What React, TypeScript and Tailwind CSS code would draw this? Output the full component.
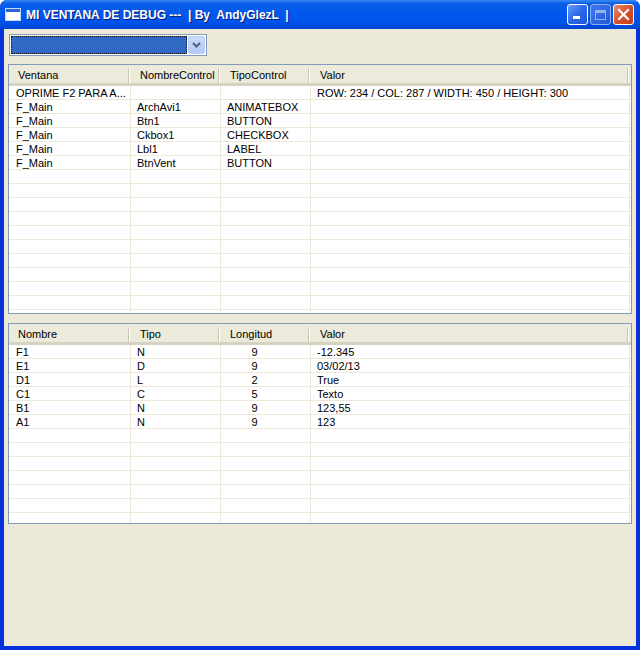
import React from "react";

const font = { fontFamily: '"Liberation Sans", Arial, sans-serif' };

// rows of the first grid (controls of the form)
const controls = [
  ["OPRIME F2 PARA A...", "", "", "ROW: 234 / COL: 287 / WIDTH: 450 / HEIGHT: 300"],
  ["F_Main", "ArchAvi1", "ANIMATEBOX", ""],
  ["F_Main", "Btn1", "BUTTON", ""],
  ["F_Main", "Ckbox1", "CHECKBOX", ""],
  ["F_Main", "Lbl1", "LABEL", ""],
  ["F_Main", "BtnVent", "BUTTON", ""],
];

// rows of the second grid (variables)
const vars = [
  ["F1", "N", "9", "-12.345"],
  ["E1", "D", "9", "03/02/13"],
  ["D1", "L", "2", "True"],
  ["C1", "C", "5", "Texto"],
  ["B1", "N", "9", "123,55"],
  ["A1", "N", "9", "123"],
];

function HeaderCell({ label, w }: { label: string; w: string }) {
  return (
    <div className={`${w} flex items-center h-full pl-[9px]`}>
      <span className="text-[11px] leading-none text-black">{label}</span>
      <div className="ml-auto mr-[1px] flex h-[15px]">
        <div className="w-px bg-[#C7C5B2]" />
        <div className="w-px bg-white" />
      </div>
    </div>
  );
}

function Grid({
  headers,
  rows,
  total,
  height,
  centerThird,
}: {
  headers: string[];
  rows: string[][];
  total: number;
  height: string;
  centerThird?: boolean;
}) {
  const filled = [...rows];
  while (filled.length < total) filled.push(["", "", "", ""]);
  const widths = ["w-[122px]", "w-[90px]", "w-[90px]", "flex-1"];

  return (
    <div className={`${height} mx-[4px] border border-[#7F9DB9] bg-white flex flex-col overflow-hidden`}>
      <div className="flex h-[21px] shrink-0 pt-[3px] bg-[#EBEADB] border-b-[3px] border-[#D6D2C2]">
        {headers.map((h, i) => (
          <HeaderCell key={h} label={h} w={i === 3 ? "flex-1 pr-[1px]" : widths[i]} />
        ))}
      </div>
      <div className="flex flex-col">
        {filled.map((r, ri) => (
          <div key={ri} className="flex h-[14px] shrink-0 border-b border-[#ECE9D8]">
            {r.map((c, ci) => (
              <div
                key={ci}
                className={`${widths[ci]} border-r border-[#ECE9D8] text-[11px] leading-[14px] text-black whitespace-nowrap overflow-hidden ${
                  centerThird && ci === 2 ? "text-center pr-[22px]" : "pl-[6px]"
                } ${ci === 0 ? "pl-[7px]" : ""} ${ci === 3 ? "mr-[1px]" : ""}`}
              >
                {c}
              </div>
            ))}
          </div>
        ))}
      </div>
    </div>
  );
}

function CaptionButtons() {
  return (
    <div className="flex gap-[2px] mr-[1px]">
      <div className="w-[21px] h-[21px] rounded-[3px] border border-white bg-gradient-to-br from-[#6A9CFB] via-[#2B67E8] to-[#1E55D6] flex items-end pl-[5px] pb-[5px]">
        <div className="w-[7px] h-[3px] bg-white" />
      </div>
      <div className="w-[21px] h-[21px] rounded-[3px] border border-[#8BB0F4] bg-gradient-to-br from-[#3D78EE] to-[#2658D8] flex items-center justify-center">
        <div className="w-[11px] h-[10px] border border-[#94B4F2] border-t-[3px]" />
      </div>
      <div className="w-[21px] h-[21px] rounded-[3px] border border-white bg-gradient-to-br from-[#E88A6A] via-[#D9512A] to-[#C43A15] flex items-center justify-center">
        <svg width="13" height="13" viewBox="0 0 13 13">
          <path d="M2 2 L11 11 M11 2 L2 11" stroke="white" strokeWidth="2.2" strokeLinecap="square" />
        </svg>
      </div>
    </div>
  );
}

export default function App() {
  return (
    <div style={font} className="w-[640px] h-[650px] flex flex-col bg-[#0831D9] rounded-t-[7px] overflow-hidden">
      {/* title bar */}
      <div className="h-[29px] shrink-0 flex items-center pl-[5px] pr-[5px] bg-[linear-gradient(to_bottom,#3A8CF5_0%,#0A5FE6_12%,#0058EE_45%,#0052E8_80%,#0043CF_100%)]">
        <div className="w-[16px] h-[13px] bg-white border border-[#C8D8F8] flex flex-col">
          <div className="h-[3px] bg-[#2A63DA]" />
        </div>
        <span className="ml-[5px] text-white font-bold text-[12px] [text-shadow:1px_1px_0_#0A1E80] whitespace-pre">
          MI VENTANA DE DEBUG ---  | By  AndyGlezL  |
        </span>
        <div className="ml-auto">
          <CaptionButtons />
        </div>
      </div>

      {/* client area */}
      <div className="flex-1 mx-[4px] mb-[4px] bg-[#ECE9D8] flex flex-col">
        <div className="pt-[5px] pl-[5px]">
          <div className="w-[198px] h-[22px] border border-[#7F9DB9] bg-white flex items-center p-[1px] gap-[1px]">
            <div className="flex-1 h-[18px] bg-[#316AC5] border border-dotted border-[#111]" />
            <div className="w-[17px] h-[18px] rounded-[2px] bg-gradient-to-b from-[#CBDAFC] to-[#B3C8F5] border border-[#BCCDF6] flex items-center justify-center">
              <svg width="9" height="6" viewBox="0 0 9 6">
                <path d="M1 1 L4.5 4.5 L8 1" stroke="#4D6185" strokeWidth="2" fill="none" />
              </svg>
            </div>
          </div>
        </div>

        <div className="mt-[8px]">
          <Grid
            headers={["Ventana", "NombreControl", "TipoControl", "Valor"]}
            rows={controls}
            total={17}
            height="h-[250px]"
          />
        </div>
        <div className="mt-[9px]">
          <Grid
            headers={["Nombre", "Tipo", "Longitud", "Valor"]}
            rows={vars}
            total={13}
            height="h-[201px]"
            centerThird
          />
        </div>
      </div>
    </div>
  );
}
